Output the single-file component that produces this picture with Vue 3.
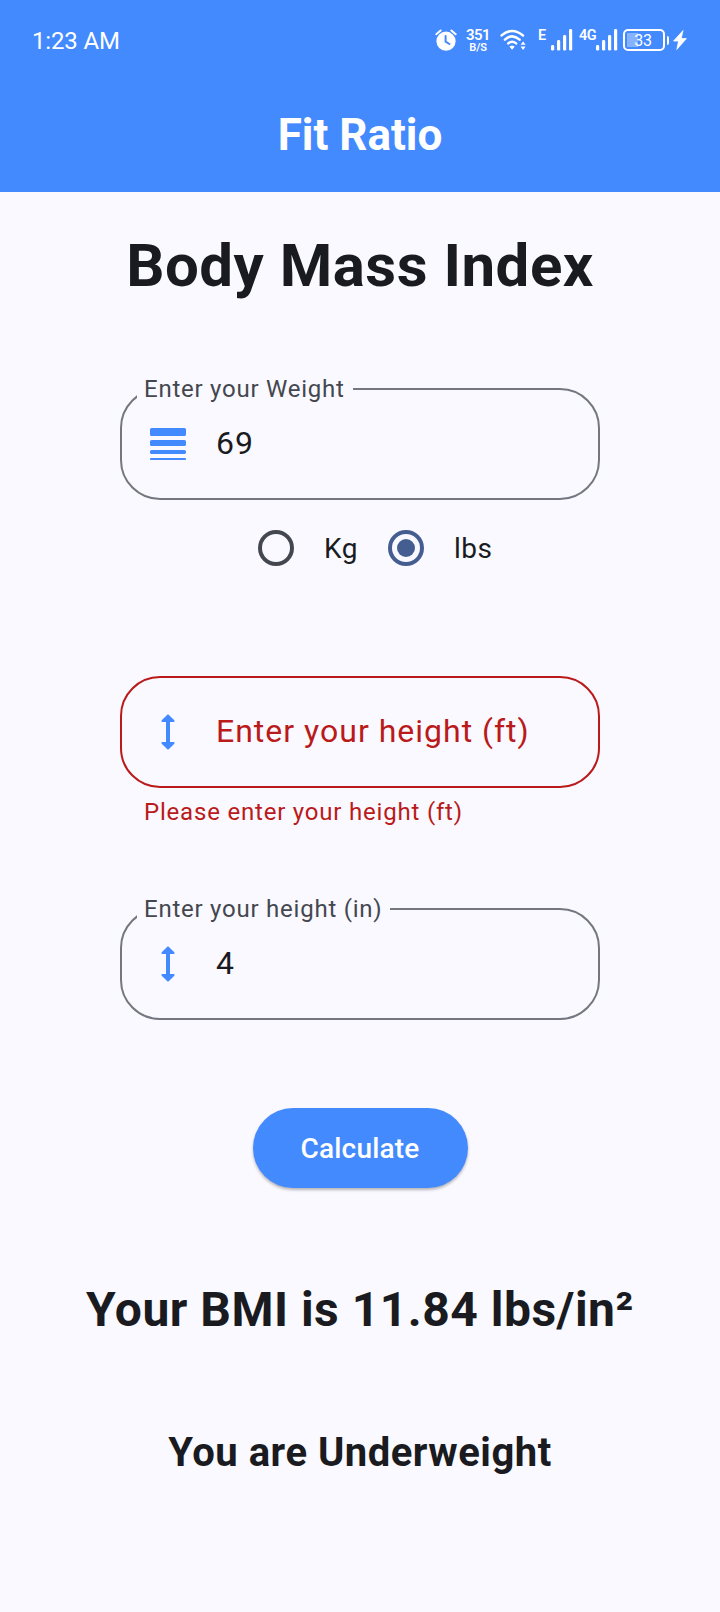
<script setup>
import { ref } from 'vue'

const weight = ref('69')
const heightIn = ref('4')
const unit = ref('lbs')
const units = ['Kg', 'lbs']
</script>

<template>
  <div class="screen">
    <header class="top">
      <div class="status">
        <span class="clock">1:23 AM</span>
        <svg class="alarm" width="22" height="22" viewBox="0 0 22 22">
          <circle cx="11" cy="12.2" r="9.6" fill="#fff" />
          <path d="M1.3 5.2 5.6 1.5M20.7 5.2 16.4 1.5" stroke="#fff" stroke-width="2" stroke-linecap="round" />
          <path d="M10.6 7v5.6l3.8 2.4" fill="none" stroke="#448aff" stroke-width="2" stroke-linecap="round" />
        </svg>
        <div class="speed"><b>351</b><small>B/S</small></div>
        <svg class="wifi" width="26" height="22" viewBox="0 0 26 22">
          <g fill="none" stroke="#fff" stroke-width="2.5" stroke-linecap="round">
            <path d="M1.6 6.4Q12 -2.4 23 6.4" />
            <path d="M4.9 10.6Q12 4.2 19.6 10.6" />
            <path d="M8.3 14.4Q12 11 16.1 14.4" />
          </g>
          <path d="M10 17.6Q12.2 16.4 14.2 17.6L12.1 20.2z" fill="#fff" stroke="#fff" stroke-linejoin="round" />
          <path d="M20.6 15.8 23.1 12.4 25.6 15.8zM20.6 17.6 23.1 21 25.6 17.6z" fill="#fff" />
        </svg>
        <span class="net net-e">E</span>
        <svg class="bars" width="22" height="22" viewBox="0 0 22 22">
          <g fill="#fff">
            <rect x="0" y="16" width="3.2" height="5.6" rx="1.4" />
            <rect x="6" y="11" width="3.2" height="10.6" rx="1.4" />
            <rect x="12" y="6" width="3.2" height="15.6" rx="1.4" />
            <rect x="18" y="0" width="3.2" height="21.6" rx="1.4" />
          </g>
        </svg>
        <span class="net net-4g">4G</span>
        <svg class="bars" width="22" height="22" viewBox="0 0 22 22">
          <g fill="#fff">
            <rect x="0" y="16" width="3.2" height="5.6" rx="1.4" />
            <rect x="6" y="11" width="3.2" height="10.6" rx="1.4" />
            <rect x="12" y="6" width="3.2" height="15.6" rx="1.4" />
            <rect x="18" y="0" width="3.2" height="21.6" rx="1.4" />
          </g>
        </svg>
        <div class="battery"><span>33</span></div>
        <i class="nub"></i>
        <svg class="bolt" width="14" height="20" viewBox="0 0 14 20">
          <path d="M10 .6 .6 11h5L3.8 19.4 13.4 8.6H8.2z" fill="#fff" stroke="#fff" stroke-width=".8" stroke-linejoin="round" />
        </svg>
      </div>
      <h1 class="appbar">Fit Ratio</h1>
    </header>

    <main class="body">
      <h2 class="heading">Body Mass Index</h2>

      <div class="field">
        <span class="label">Enter your Weight</span>
        <svg class="icon" width="48" height="48" viewBox="0 0 24 24">
          <g fill="#448aff">
            <rect x="3" y="4" width="18" height="4" rx=".8" />
            <rect x="3" y="10" width="18" height="3" rx=".8" />
            <rect x="3" y="15" width="18" height="2" rx=".8" />
            <rect x="3" y="19" width="18" height="1" rx=".4" />
          </g>
        </svg>
        <span class="value">{{ weight }}</span>
      </div>

      <div class="units">
        <label v-for="u in units" :key="u" class="unit" @click="unit = u">
          <svg class="radio" :class="{ on: unit === u }" width="36" height="36" viewBox="0 0 36 36">
            <circle cx="18" cy="18" r="16" fill="none" stroke="currentColor" stroke-width="4" />
            <circle v-if="unit === u" cx="18" cy="18" r="9" fill="currentColor" />
          </svg>
          <span>{{ u }}</span>
        </label>
      </div>

      <div class="field error">
        <svg class="icon" width="48" height="48" viewBox="0 0 24 24">
          <path fill="#448aff" d="M13 6.99h1.79c.45 0 .67-.54.35-.85l-2.79-2.78c-.2-.19-.51-.19-.71 0L8.86 6.14c-.32.31-.1.85.35.85H11v10.02H9.21c-.45 0-.67.54-.35.85l2.79 2.78c.2.19.51.19.71 0l2.79-2.78c.32-.31.09-.85-.35-.85H13V6.99z" />
        </svg>
        <span class="value">Enter your height (ft)</span>
      </div>
      <p class="message">Please enter your height (ft)</p>

      <div class="field inches">
        <span class="label">Enter your height (in)</span>
        <svg class="icon" width="48" height="48" viewBox="0 0 24 24">
          <path fill="#448aff" d="M13 6.99h1.79c.45 0 .67-.54.35-.85l-2.79-2.78c-.2-.19-.51-.19-.71 0L8.86 6.14c-.32.31-.1.85.35.85H11v10.02H9.21c-.45 0-.67.54-.35.85l2.79 2.78c.2.19.51.19.71 0l2.79-2.78c.32-.31.09-.85-.35-.85H13V6.99z" />
        </svg>
        <span class="value">{{ heightIn }}</span>
      </div>

      <button class="calc" type="button">Calculate</button>

      <p class="result">Your BMI is 11.84 lbs/in²</p>
      <p class="verdict">You are Underweight</p>
    </main>
  </div>
</template>

<style>
body {
  margin: 0;
  background: #f9f9ff;
}
</style>

<style scoped>
.screen {
  width: 720px;
  height: 1612px;
  background: #f9f9ff;
  color: #1a1b20;
  font-family: Roboto, "Liberation Sans", sans-serif;
  overflow: hidden;
}
.top {
  height: 192px;
  background: #448aff;
  color: #fff;
}
.status {
  height: 80px;
  display: flex;
  align-items: center;
  padding-left: 32px;
}
.status > * {
  flex: none;
}
.status svg {
  display: block;
}
.clock {
  width: 403px;
  font-size: 24px;
  line-height: 30px;
  padding-top: 2px;
  letter-spacing: -0.15px;
}
.speed {
  width: 30px;
  margin-left: 6px;
  text-align: center;
  display: flex;
  flex-direction: column;
}
.speed b {
  font-size: 15px;
  font-weight: 600;
  line-height: 14px;
  letter-spacing: -0.6px;
}
.speed small {
  font-size: 11px;
  font-weight: 600;
  line-height: 11px;
  letter-spacing: -0.2px;
}
.wifi {
  margin-left: 7px;
}
.net {
  font-size: 14.5px;
  font-weight: 600;
  line-height: 16px;
  padding-bottom: 9px;
}
.net-e {
  width: 13px;
  margin-left: 12px;
}
.net-4g {
  width: 17px;
  margin-left: 6px;
  letter-spacing: -0.5px;
}
.battery {
  box-sizing: border-box;
  width: 42px;
  height: 22px;
  margin-left: 5px;
  border: 2px solid #fff;
  border-radius: 5px;
  background: linear-gradient(#86b3ff, #86b3ff) 2px 2px / 11px 14px no-repeat;
  font-size: 16px;
  line-height: 19px;
  text-align: center;
}
.battery span {
  padding-right: 2px;
  letter-spacing: -0.2px;
}
.nub {
  width: 2px;
  height: 9px;
  margin-left: 2px;
  border-radius: 0 2px 2px 0;
  background: #fff;
}
.bolt {
  margin-left: 4px;
}
.appbar {
  margin: 0;
  height: 110px;
  font-size: 44px;
  font-weight: 700;
  line-height: 110px;
  text-align: center;
}
.body {
  display: flex;
  flex-direction: column;
  align-items: center;
}
.heading {
  margin: 38px 0 87px;
  font-size: 60px;
  font-weight: 700;
  line-height: 71px;
  letter-spacing: 0.5px;
}
.field {
  position: relative;
  box-sizing: border-box;
  width: 480px;
  height: 112px;
  border: 2px solid #74777f;
  border-radius: 40px;
  display: flex;
  align-items: center;
  padding-left: 22px;
}
.label {
  position: absolute;
  left: 15px;
  top: -15px;
  padding: 0 8px 0 7px;
  background: #f9f9ff;
  color: #44474f;
  font-size: 24px;
  line-height: 28px;
  letter-spacing: 0.76px;
  white-space: nowrap;
}
.value {
  margin-left: 24px;
  padding-bottom: 2px;
  font-size: 32px;
  line-height: 40px;
  letter-spacing: 1px;
}
.units {
  box-sizing: border-box;
  width: 720px;
  height: 96px;
  display: flex;
  align-items: center;
  gap: 30px;
  padding-left: 258px;
}
.unit {
  display: flex;
  align-items: center;
  gap: 30px;
  font-size: 28px;
  letter-spacing: 0.5px;
}
.radio {
  display: block;
  color: #44474f;
}
.radio.on {
  color: #445e91;
}
.error {
  margin-top: 80px;
  border-color: #ba1a1a;
  color: #ba1a1a;
}
.message {
  box-sizing: border-box;
  width: 480px;
  margin: 10px 0 0;
  padding-left: 24px;
  color: #ba1a1a;
  font-size: 24px;
  line-height: 28px;
  letter-spacing: 0.8px;
}
.inches {
  margin-top: 82px;
}
.calc {
  margin-top: 88px;
  width: 215px;
  height: 80px;
  padding: 0;
  border: 0;
  border-radius: 40px;
  background: #448aff;
  color: #fff;
  font: 500 28px/82px Roboto, sans-serif;
  letter-spacing: 0.2px;
  box-shadow: 0 2px 3px rgba(0, 0, 0, 0.28);
}
.result {
  margin: 94px 0 0;
  font-size: 48px;
  font-weight: 700;
  line-height: 56px;
  letter-spacing: 0.5px;
}
.verdict {
  margin: 91px 0 0;
  font-size: 40px;
  font-weight: 700;
  line-height: 48px;
  letter-spacing: 0.5px;
}
</style>
